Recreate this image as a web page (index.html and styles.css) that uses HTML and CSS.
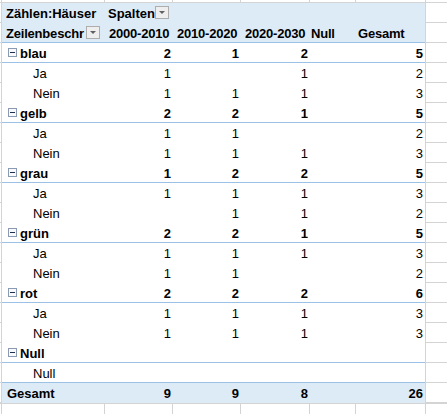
FILE: index.html
```html
<!DOCTYPE html>
<html lang="de">
<head>
<meta charset="utf-8">
<title>Pivot</title>
<link rel="stylesheet" href="styles.css">
</head>
<body>
<div class="sheet">
  <div class="strip top">
    <div class="g edge"></div><div class="g v"></div><div class="g v"></div><div class="g v"></div><div class="g v"></div><div class="g v"></div><div class="g"></div><div class="g last"></div>
  </div>
  <div class="middle">
    <div class="edge-col"></div>
    <div class="pivot">
      <div class="row hd">
        <div class="c">Zählen:Häuser</div>
        <div class="c flexc sp"><span class="txt">Spalten</span><span class="dd"></span></div>
        <div class="c"></div><div class="c"></div><div class="c"></div><div class="c"></div>
      </div>
      <div class="row hd hd2">
        <div class="c flexc"><span class="clip">Zeilenbeschr</span><span class="dd"></span></div>
        <div class="c">2000-2010</div>
        <div class="c">2010-2020</div>
        <div class="c">2020-2030</div>
        <div class="c hnull">Null</div>
        <div class="c hges">Gesamt</div>
      </div>

      <div class="row cat"><div class="c lbl"><span class="mn"></span>blau</div><div class="c n">2</div><div class="c n">1</div><div class="c n">2</div><div class="c n"></div><div class="c n">5</div></div>
      <div class="row sub"><div class="c lbl">Ja</div><div class="c n">1</div><div class="c n"></div><div class="c n">1</div><div class="c n"></div><div class="c n">2</div></div>
      <div class="row sub"><div class="c lbl">Nein</div><div class="c n">1</div><div class="c n">1</div><div class="c n">1</div><div class="c n"></div><div class="c n">3</div></div>

      <div class="row cat"><div class="c lbl"><span class="mn"></span>gelb</div><div class="c n">2</div><div class="c n">2</div><div class="c n">1</div><div class="c n"></div><div class="c n">5</div></div>
      <div class="row sub"><div class="c lbl">Ja</div><div class="c n">1</div><div class="c n">1</div><div class="c n"></div><div class="c n"></div><div class="c n">2</div></div>
      <div class="row sub"><div class="c lbl">Nein</div><div class="c n">1</div><div class="c n">1</div><div class="c n">1</div><div class="c n"></div><div class="c n">3</div></div>

      <div class="row cat"><div class="c lbl"><span class="mn"></span>grau</div><div class="c n">1</div><div class="c n">2</div><div class="c n">2</div><div class="c n"></div><div class="c n">5</div></div>
      <div class="row sub"><div class="c lbl">Ja</div><div class="c n">1</div><div class="c n">1</div><div class="c n">1</div><div class="c n"></div><div class="c n">3</div></div>
      <div class="row sub"><div class="c lbl">Nein</div><div class="c n"></div><div class="c n">1</div><div class="c n">1</div><div class="c n"></div><div class="c n">2</div></div>

      <div class="row cat"><div class="c lbl"><span class="mn"></span>grün</div><div class="c n">2</div><div class="c n">2</div><div class="c n">1</div><div class="c n"></div><div class="c n">5</div></div>
      <div class="row sub"><div class="c lbl">Ja</div><div class="c n">1</div><div class="c n">1</div><div class="c n">1</div><div class="c n"></div><div class="c n">3</div></div>
      <div class="row sub"><div class="c lbl">Nein</div><div class="c n">1</div><div class="c n">1</div><div class="c n"></div><div class="c n"></div><div class="c n">2</div></div>

      <div class="row cat"><div class="c lbl"><span class="mn"></span>rot</div><div class="c n">2</div><div class="c n">2</div><div class="c n">2</div><div class="c n"></div><div class="c n">6</div></div>
      <div class="row sub"><div class="c lbl">Ja</div><div class="c n">1</div><div class="c n">1</div><div class="c n">1</div><div class="c n"></div><div class="c n">3</div></div>
      <div class="row sub"><div class="c lbl">Nein</div><div class="c n">1</div><div class="c n">1</div><div class="c n">1</div><div class="c n"></div><div class="c n">3</div></div>

      <div class="row cat"><div class="c lbl"><span class="mn"></span>Null</div><div class="c n"></div><div class="c n"></div><div class="c n"></div><div class="c n"></div><div class="c n"></div></div>
      <div class="row sub subend"><div class="c lbl">Null</div><div class="c n"></div><div class="c n"></div><div class="c n"></div><div class="c n"></div><div class="c n"></div></div>

      <div class="row total"><div class="c tl">Gesamt</div><div class="c n">9</div><div class="c n">9</div><div class="c n">8</div><div class="c n"></div><div class="c n">26</div></div>
    </div>
    <div class="rcol"></div>
  </div>
  <div class="strip bottom">
    <div class="g edge"></div><div class="g v"></div><div class="g v"></div><div class="g v"></div><div class="g v"></div><div class="g v"></div><div class="g"></div><div class="g last"></div>
  </div>
</div>
</body>
</html>
```
FILE: styles.css
```css
html, body {
  margin: 0;
  padding: 0;
  background: #ffffff;
}
body {
  font-family: "Liberation Sans", Arial, sans-serif;
  font-size: 13px;
  color: #000000;
  overflow: hidden;
}
* { box-sizing: border-box; }

.sheet {
  width: 447px;
  height: 414px;
  display: flex;
  flex-direction: column;
}

/* outer gridline strips */
.strip {
  display: grid;
  grid-template-columns: 2px 103px 68px 68px 69px 46px 69px 22px;
}
.strip.top { height: 3px; }
.strip.top .g { border-bottom: 1px solid #d4d4d4; }
.strip.bottom { height: 11px; }
.strip.bottom .g { border-top: 1px solid #d4d4d4; }
.strip .edge, .strip .v { border-right: 1px solid #d4d4d4; }
.strip .last { border-left: 1px solid #d4d4d4; }

.middle {
  display: flex;
  height: 400px;
}
.edge-col {
  width: 2px;
  border-right: 1px solid #d4d4d4;
  background: repeating-linear-gradient(to bottom, transparent 0 19px, #d4d4d4 19px 20px);
}
.rcol {
  width: 22px;
  border-left: 1px solid #d4d4d4;
  background: repeating-linear-gradient(to bottom, transparent 0 19px, #d4d4d4 19px 20px);
}

.pivot {
  width: 423px;
  display: flex;
  flex-direction: column;
}
.row {
  height: 20px;
  display: grid;
  grid-template-columns: 103px 68px 68px 69px 46px 69px;
  border-bottom: 1px solid transparent;
}
.c {
  line-height: 19px;
  padding: 1px 3px 0 3px;
  white-space: nowrap;
  overflow: hidden;
}
.row.hd { background: #ddebf7; font-weight: bold; border-bottom-color: #ddebf7; }
.row.hd2 { border-bottom-color: #9bc2e6; }
.hd .c { padding-left: 4px; }
.hd2 .c { letter-spacing: -0.2px; }
.hd .sp { padding-left: 3px; padding-right: 2px; }
.hd2 .hnull { padding-left: 1px; }
.hd2 .hges { padding-left: 2px; }

.flexc {
  display: flex;
  align-items: center;
}
.txt {
  flex: none;
  white-space: nowrap;
}
.clip {
  flex: 1;
  min-width: 0;
  overflow: hidden;
  white-space: nowrap;
}
.sp .dd { margin-left: auto; }
.dd {
  flex: none;
  width: 14px;
  height: 13px;
  margin-right: 2px;
  margin-top: -1px;
  border: 1px solid #adadad;
  background: #eeeeee;
  display: flex;
  align-items: center;
  justify-content: center;
}
.dd::after {
  content: "";
  width: 0;
  height: 0;
  border-left: 3px solid transparent;
  border-right: 3px solid transparent;
  border-top: 3px solid #606060;
}

.row.cat { font-weight: bold; border-bottom-color: #9bc2e6; }
.row.subend { border-bottom-color: #9bc2e6; }
.n { text-align: right; padding-right: 2px; }
.cat .lbl {
  padding-left: 6px;
  display: flex;
  align-items: center;
}
.mn {
  width: 9px;
  height: 9px;
  margin-right: 3px;
  margin-top: -1px;
  border: 1px solid #8a9ab3;
  background: #f7f9fc;
  display: flex;
  align-items: center;
  justify-content: center;
}
.mn::after {
  content: "";
  width: 5px;
  height: 1px;
  background: #1f2f4f;
}
.sub .lbl { padding-left: 31px; }

.row.total { background: #ddebf7; font-weight: bold; border-bottom-color: #ddebf7; }
.total .tl { padding-left: 5px; }
```
